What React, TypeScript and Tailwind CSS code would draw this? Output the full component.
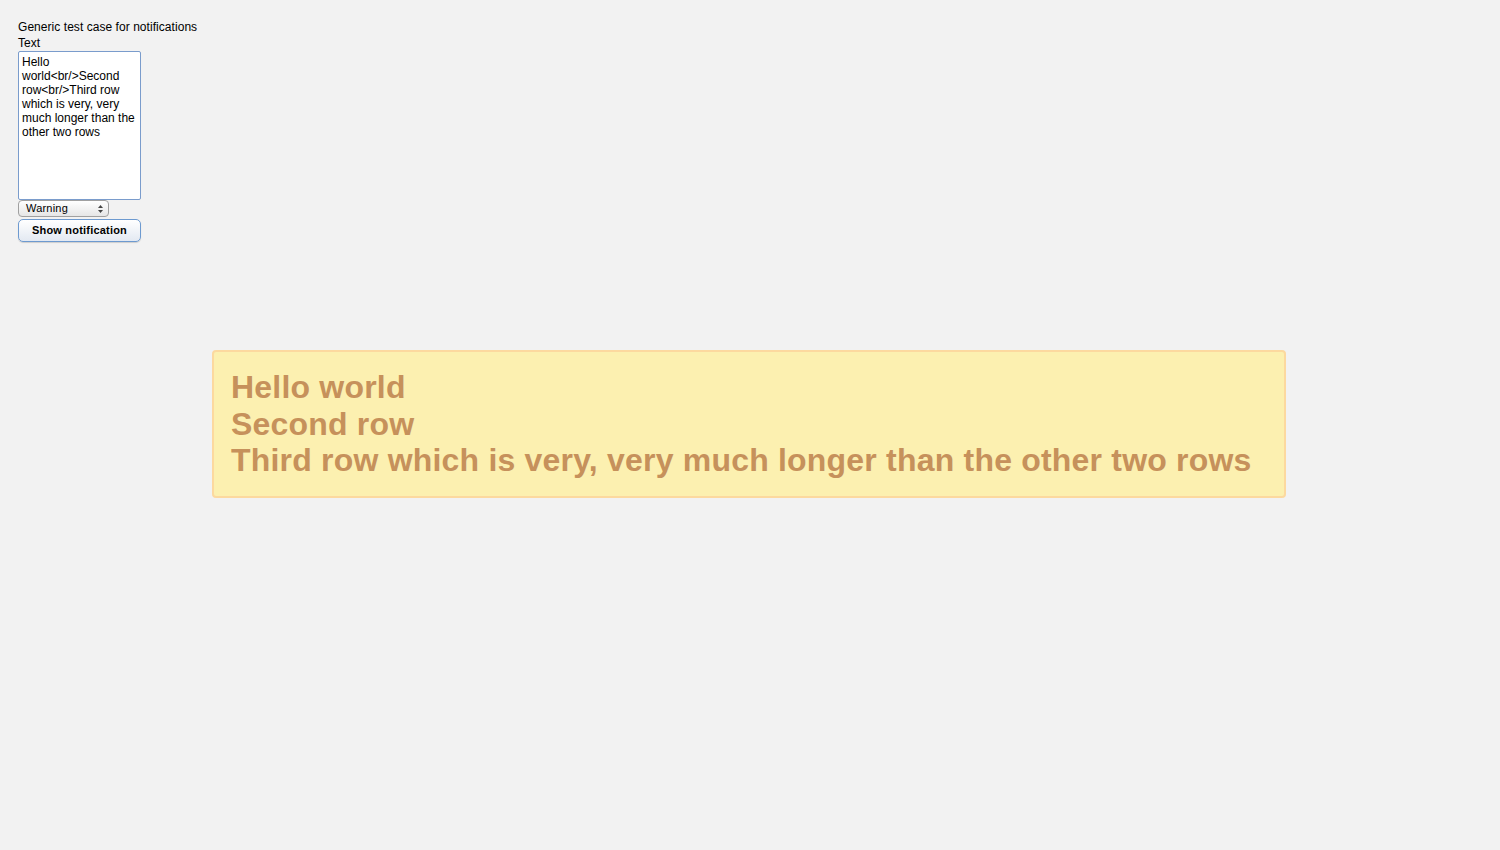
import React from "react";

const TEXT =
  "Hello world<br/>Second row<br/>Third row which is very, very much longer than the other two rows";

/** Left column: test form with textarea, type select and trigger button. */
function TestForm() {
  return (
    <div className="flex flex-col items-start pl-[18px] pt-[19px] font-['Liberation_Sans',Arial,sans-serif] text-[12px] text-black">
      <div className="leading-[17px] tracking-[0.05px]">Generic test case for notifications</div>
      <label className="leading-[15px]">Text</label>
      <textarea
        defaultValue={TEXT}
        spellCheck={false}
        className="w-[123px] h-[149px] resize-none bg-white border border-[#7a9ccc] rounded-[2px] px-[3px] pt-[3px] pb-[1px] text-[12px] leading-[14px] text-black outline-none font-['Liberation_Sans',Arial,sans-serif]"
      />
      {/* Fake native select */}
      <div className="relative w-[91px] h-[17px] rounded-[4px] border border-[#a0a0a0] bg-gradient-to-b from-white to-[#e6e6e6] flex items-center">
        <span className="pl-[7px] text-[11px] leading-none tracking-[0.2px]">Warning</span>
        <svg
          className="absolute right-[5px] top-[4px]"
          width="5"
          height="8"
          viewBox="0 0 5 8"
          aria-hidden="true"
        >
          <path d="M2.5 0 L5 3 L0 3 Z" fill="#444" />
          <path d="M0 5 L5 5 L2.5 8 Z" fill="#444" />
        </svg>
      </div>
      <button className="mt-[2px] w-[123px] h-[23px] rounded-[5px] border border-[#6d9ad0] bg-gradient-to-b from-white to-[#e3e9f2] shadow-[0_1px_1px_rgba(0,0,0,0.15)] text-[11px] font-bold leading-none text-black tracking-[0.2px]">
        Show notification
      </button>
    </div>
  );
}

/** Warning notification overlay, centred in the viewport. */
function Notification() {
  return (
    <div className="absolute left-[212px] top-[350px] w-[1074px] h-[148px] rounded-[4px] border-2 border-[#fcd99f] bg-[#fcf0b0] pl-[17px] pt-[17px] font-['Liberation_Sans',Arial,sans-serif] font-bold text-[32px] leading-[36.5px] tracking-[0.2px] text-[#c6915b]">
      Hello world
      <br />
      Second row
      <br />
      Third row which is very, very much longer than the other two rows
    </div>
  );
}

export default function App() {
  return (
    <div className="relative w-[1500px] h-[850px] bg-[#f2f2f2] overflow-hidden">
      <TestForm />
      <Notification />
    </div>
  );
}
